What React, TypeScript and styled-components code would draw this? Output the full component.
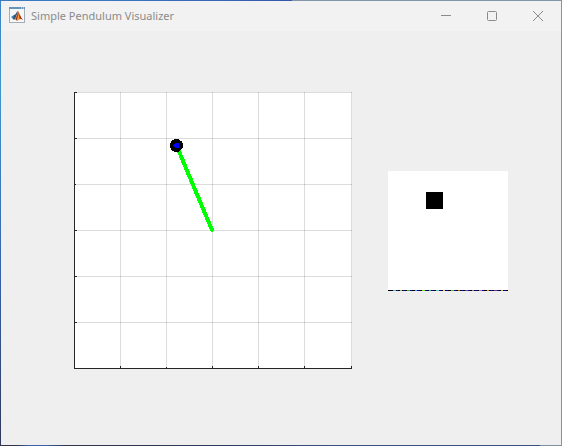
import React from "react";
import styled, { createGlobalStyle } from "styled-components";

const GlobalStyle = createGlobalStyle`
  * { box-sizing: border-box; }
  body { margin: 0; background: #efefef; }
`;

const Frame = styled.div`
  min-height: 100vh;
  display: flex;
  flex-direction: column;
  padding: 1px;
  background:
    linear-gradient(90deg, #303348 0 3%, #3a62a8 5% 8%, #303348 12%, #303a60 40%, #3b4f88 60% 96%, #82909d 96%) bottom / 100% 1px no-repeat,
    linear-gradient(90deg, #3a7ac0 0 15%, #3865b8 40%, #3455ac 52%, #8296a8 52%) top / 100% 1px no-repeat,
    linear-gradient(#3d83c4, #4096cb 20%, #3764ac 60%, #303759) left / 1px 100% no-repeat,
    #8296a8;
`;

const TitleBar = styled.header`
  height: 30px;
  flex: none;
  display: flex;
  align-items: center;
  padding: 0 0 2px 8px;
  gap: 6px;
  background: #f2f2f2;
`;

const Title = styled.h1`
  margin: 0;
  padding-top: 2px;
  flex: 1;
  font: 400 11px/16px "Noto Sans", "Open Sans", sans-serif;
  color: #8b8b8b;
  white-space: nowrap;
`;

const WindowControls = styled.div`
  display: flex;
  align-self: flex-start;
`;

const ControlButton = styled.button`
  width: 46px;
  height: 30px;
  padding: 0;
  border: 0;
  display: grid;
  place-items: center;
  background: transparent;
  color: #8b8b8b;

  &:hover { background: #e2e2e2; }
`;

const Figure = styled.main`
  flex: 1;
  display: grid;
  grid-template-columns: 278fr 120fr;
  align-items: center;
  align-content: start;
  gap: 36px;
  padding: 61px 53px 61px 73px;
  background: #efefef;
`;

const Plot = styled.svg`
  display: block;
  width: 100%;
  height: auto;
`;

const SensorView = styled(Plot)`
  margin-top: 1px;
`;

const Glyph = styled.svg`
  display: block;
  fill: none;
  stroke: currentColor;
`;

const ticksX = [46, 92, 138, 184, 230, 277];
const ticksY = [0, 46, 92, 138, 184, 230];
const noise = [
  "#42c5a0", "#a0c060", "#18bf3c", "#38a0ee", "#86e020", "#18b8b0", "#58c8b8", "#edc057",
  "#55bf20", "#b87520", "#485088", "#a87878", "#bd62c0", "#e58b15", "#653d80", "#eeb025",
];

function MatlabIcon() {
  return (
    <svg width="16" height="16" viewBox="0 0 16 16" aria-hidden="true">
      <rect x="0.5" y="0.5" width="15" height="15" fill="#f5f7f8" stroke="#a3adb5" />
      <path d="M0 0h16v2H0z" fill="#6595bd" />
      <path d="M12 1h1m1 0h1" stroke="#e5f2fb" />
      <path d="M2 10l3-2 2 1-3 3z" fill="#4384b5" />
      <path d="M5 8c2 0 2-3 4-4l-2 6-2 3-1-1z" fill="#285878" />
      <path d="M9 4c1 1 2 6 5 9-2-2-4-1-6 1-1-1-1-2-3-1 2-2 3-5 4-9z" fill="#d75720" />
      <path d="M9 4c0 3 0 6-1 9l-1-1c1-2 2-5 2-8z" fill="#762a25" />
      <path d="M9 7c1 2 1 3 1 5l-2 2c0-2 1-4 1-7z" fill="#f5ae39" />
      <path d="M10 6c1 2 2 5 4 7l-3-2z" fill="#9f2c1d" />
    </svg>
  );
}

function PendulumPlot() {
  return (
    <Plot viewBox="0 0 278 277" shapeRendering="crispEdges" role="img" aria-label="Pendulum position">
      <rect width="278" height="277" fill="#fff" />
      <g fill="#262626" fillOpacity="0.16">
        {ticksX.map((x) => <rect key={x} x={x} y="0" width="1" height="277" />)}
        {ticksY.map((y) => <rect key={y} x="0" y={y} width="278" height="1" />)}
      </g>
      <g fill="#262626">
        <rect width="1" height="277" />
        <rect y="276" width="278" height="1" />
        {ticksX.map((x) => <rect key={x} x={x} y={x === 92 ? 275 : 274} width="1" height="3" />)}
        {ticksY.map((y) => <rect key={y} x="0" y={y} width={y === 92 ? 2 : 3} height="1" />)}
      </g>
      <path d="M102.5 53.5L138 138" stroke="#0f0" strokeWidth="4" strokeLinecap="round" />
      <circle cx="102.5" cy="53.5" r="6.5" fill="#000" />
      <ellipse cx="102.5" cy="53.5" rx="3" ry="2.5" fill="#00f" />
    </Plot>
  );
}

function SensorImage() {
  return (
    <SensorView viewBox="0 0 120 120" shapeRendering="crispEdges" role="img" aria-label="Pendulum bob image">
      <rect width="120" height="120" fill="#fff" />
      <rect x="38" y="21" width="17" height="17" fill="#000" />
      <rect y="119" width="120" height="1" fill="#00000c" />
      {noise.map((color, i) => {
        const x = Math.round(5 + i * 7.2);
        return (
          <g key={color}>
            <rect x={x} y="119" width={i % 2 ? 2 : 3} height="1" fill={color} />
            <rect x={x + 3} y="119" width="2" height="1" fill="#0b0b9a" />
          </g>
        );
      })}
    </SensorView>
  );
}

export default function App() {
  return (
    <>
      <GlobalStyle />
      <Frame>
        <TitleBar>
          <MatlabIcon />
          <Title>Simple Pendulum Visualizer</Title>
          <WindowControls>
            <ControlButton aria-label="Minimize">
              <Glyph width="10" height="10" viewBox="0 0 10 10"><path d="M0 4.5h10" /></Glyph>
            </ControlButton>
            <ControlButton aria-label="Maximize">
              <Glyph width="10" height="10" viewBox="0 0 10 10"><rect x="0.5" y="0.5" width="9" height="9" rx="1" /></Glyph>
            </ControlButton>
            <ControlButton aria-label="Close">
              <Glyph width="10" height="10" viewBox="0 0 10 10"><path d="M0 0l10 10M10 0L0 10" /></Glyph>
            </ControlButton>
          </WindowControls>
        </TitleBar>
        <Figure>
          <PendulumPlot />
          <SensorImage />
        </Figure>
      </Frame>
    </>
  );
}
